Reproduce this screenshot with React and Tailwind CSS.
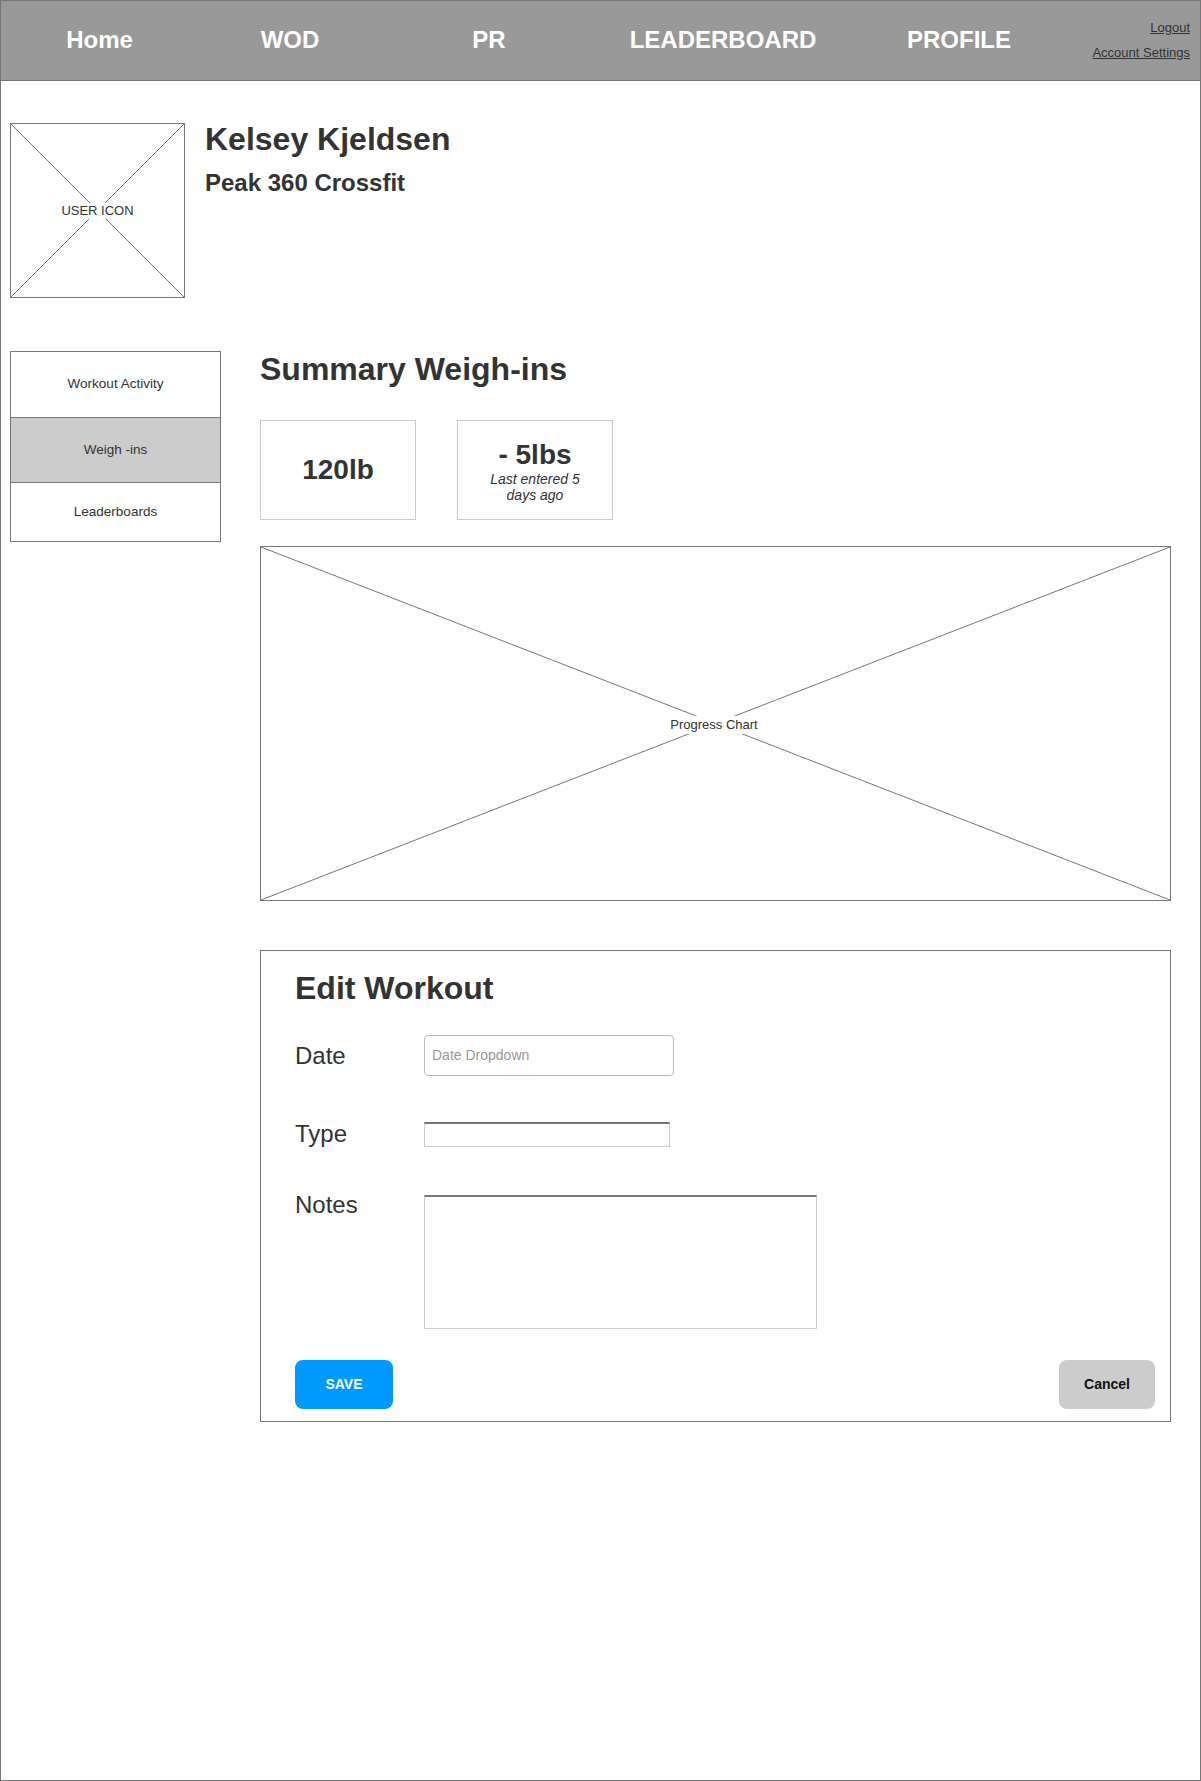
import React from 'react';

const navItems = [
  { label: 'Home', w: 'w-[197px]' },
  { label: 'WOD', w: 'w-[184px]' },
  { label: 'PR', w: 'w-[214px]' },
  { label: 'LEADERBOARD', w: 'w-[254px]' },
  { label: 'PROFILE', w: 'w-[218px]' },
];

const sideItems = [
  { label: 'Workout Activity', h: 'h-[66px]', active: false },
  { label: 'Weigh -ins', h: 'h-[65px]', active: true },
  { label: 'Leaderboards', h: 'h-[58px]', active: false },
];

// placeholder cross, drawn over a box
const Cross = () => (
  <svg className="absolute inset-0 w-full h-full" preserveAspectRatio="none" viewBox="0 0 100 100">
    <line x1="0" y1="0" x2="100" y2="100" stroke="#777" strokeWidth="1" vectorEffect="non-scaling-stroke" />
    <line x1="100" y1="0" x2="0" y2="100" stroke="#777" strokeWidth="1" vectorEffect="non-scaling-stroke" />
  </svg>
);

const App = () => {
  return (
    <div className="w-[1201px] h-[1781px] border border-[#777] bg-white text-[#333] font-['Liberation_Sans',Arial,sans-serif]">
      <header className="h-[80px] bg-[#999] border-b border-[#777] flex items-center">
        {navItems.map((item) => (
          <div key={item.label} className={`${item.w} text-center text-white font-bold text-[24px] leading-none -mt-[1px]`}>
            {item.label}
          </div>
        ))}
        <div className="flex-1 flex flex-col items-end gap-[9px] pr-[10px] text-[13px] leading-[16px] text-[#333]">
          <a className="underline" href="#">Logout</a>
          <a className="underline" href="#">Account Settings</a>
        </div>
      </header>

      <section className="flex pl-[9px] mt-[42px]">
        <div className="relative w-[175px] h-[175px] border border-[#777] flex items-center justify-center">
          <Cross />
          <span className="relative bg-white px-[2px] text-[13px] leading-[16px]">USER ICON</span>
        </div>
        <div className="ml-[20px] -mt-[2px]">
          <h1 className="font-bold text-[32px] leading-[37px]">Kelsey Kjeldsen</h1>
          <h2 className="mt-[11px] font-bold text-[24px] leading-[28px]">Peak 360 Crossfit</h2>
        </div>
      </section>

      <div className="flex pl-[9px] mt-[53px]">
        <nav className="w-[211px] self-start border border-[#777]">
          {sideItems.map((item, i) => (
            <div
              key={item.label}
              className={`${item.h} flex items-center justify-center text-[13.5px] ${
                item.active ? 'bg-[#ccc]' : 'bg-white'
              } ${i < sideItems.length - 1 ? 'border-b border-[#777]' : ''}`}
            >
              {item.label}
            </div>
          ))}
        </nav>

        <main className="ml-[39px] w-[911px]">
          <h2 className="font-bold text-[32px] leading-[37px]">Summary Weigh-ins</h2>

          <div className="flex gap-[41px] mt-[32px]">
            <div className="w-[156px] h-[100px] border border-[#ccc] flex items-center justify-center">
              <span className="font-bold text-[28px] leading-none">120lb</span>
            </div>
            <div className="w-[156px] h-[100px] border border-[#ccc] flex flex-col items-center justify-center">
              <span className="font-bold text-[28px] leading-[32px] mt-[2px]">- 5lbs</span>
              <span className="w-[110px] text-center italic text-[14px] leading-[16px]">Last entered 5 days ago</span>
            </div>
          </div>

          <div className="relative mt-[26px] h-[355px] border border-[#777] flex items-center justify-center">
            <Cross />
            <span className="relative bg-white px-[4px] text-[13px] leading-[18px] mt-[3px] ml-[-3px]">Progress Chart</span>
          </div>

          <div className="mt-[49px] h-[472px] border border-[#777] pl-[34px] pr-[15px] pt-[19px]">
            <h2 className="font-bold text-[32px] leading-[37px]">Edit Workout</h2>

            <div className="flex items-center mt-[28px]">
              <label className="w-[129px] text-[24px] leading-[28px]">Date</label>
              <div className="w-[250px] h-[41px] border border-[#bbb] rounded-[4px] flex items-center px-[7px] text-[14px] text-[#999]">
                Date Dropdown
              </div>
            </div>

            <div className="flex items-center mt-[44px]">
              <label className="w-[129px] text-[24px] leading-[28px]">Type</label>
              <div className="w-[246px] h-[25px] border border-[#ccc] border-t-2 border-t-[#777]" />
            </div>

            <div className="flex items-start mt-[47px]">
              <label className="w-[129px] text-[24px] leading-[28px] -mt-[4px]">Notes</label>
              <div className="w-[393px] h-[134px] border border-[#ccc] border-t-2 border-t-[#777]" />
            </div>

            <div className="flex justify-between mt-[31px]">
              <button className="w-[98px] h-[49px] rounded-[8px] bg-[#0099ff] text-white font-bold text-[14px]">
                SAVE
              </button>
              <button className="w-[96px] h-[49px] rounded-[8px] bg-[#ccc] text-[#111] font-bold text-[14px]">
                Cancel
              </button>
            </div>
          </div>
        </main>
      </div>
    </div>
  );
};

export default App;
